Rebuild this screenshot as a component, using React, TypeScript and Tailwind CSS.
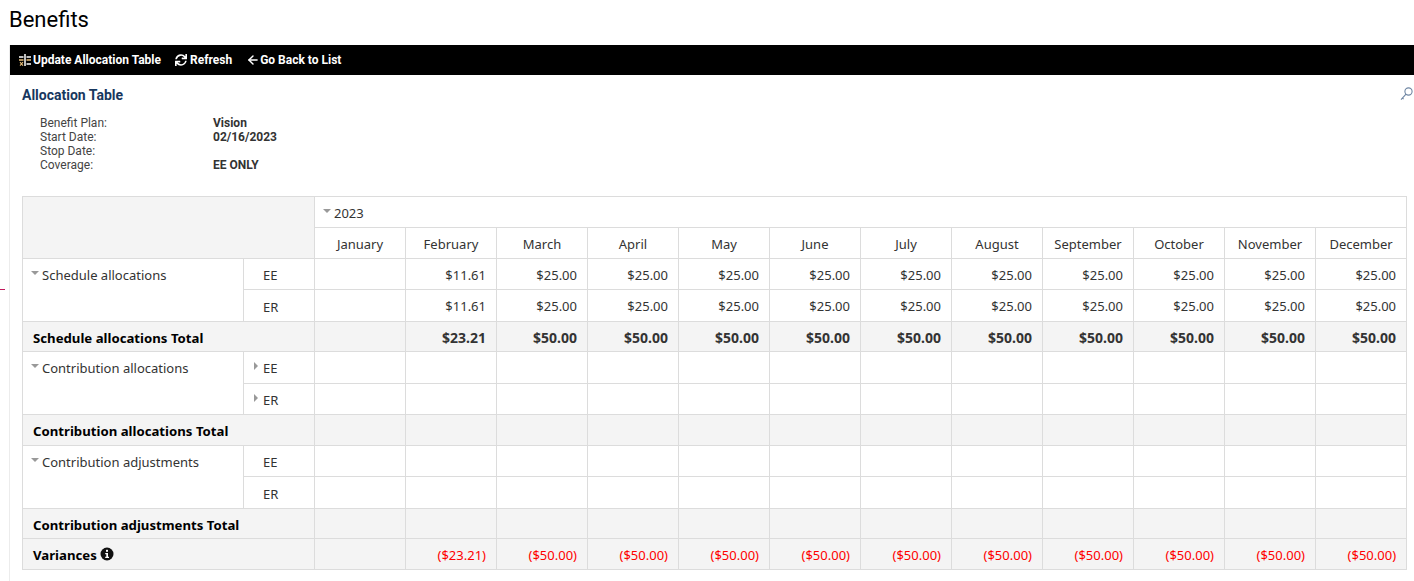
import { ArrowLeft } from "lucide-react";
import { FaSync } from "react-icons/fa";

const months = [
  "January",
  "February",
  "March",
  "April",
  "May",
  "June",
  "July",
  "August",
  "September",
  "October",
  "November",
  "December",
];

const vals = (first: string, rest: string) =>
  ["", first, ...Array(10).fill(rest)] as string[];

const blank = Array(12).fill("") as string[];

const border = "border border-[#dcdcdc] align-middle";
const cell = `${border} pl-[9px] pr-[10px] pt-[3px]`;

function DownCaret() {
  return (
    <span className="inline-block w-0 h-0 mr-[3px] mb-[5px] border-x-[4px] border-x-transparent border-t-[4px] border-t-[#999]" />
  );
}

function RightCaret() {
  return (
    <span className="absolute left-[10px] top-[10px] w-0 h-0 border-y-[4px] border-y-transparent border-l-[4px] border-l-[#999]" />
  );
}

function GroupRows({
  label,
  ee,
  er,
  totals,
  carets,
  totalPad = "pt-[5px]",
  h,
}: {
  label: string;
  ee: string[];
  er: string[];
  totals: string[];
  carets?: boolean;
  totalPad?: string;
  h: [string, string, string];
}) {
  return (
    <>
      <tr className={h[0]}>
        <td rowSpan={2} className="border border-[#dcdcdc] align-top pt-[7px] pl-[8px]">
          <DownCaret />
          {label}
        </td>
        <td className={`${border} relative pl-[19px] pt-[3px]`}>
          {carets && <RightCaret />}
          EE
        </td>
        {ee.map((v, i) => (
          <td key={i} className={`${cell} text-right`}>
            {v}
          </td>
        ))}
      </tr>
      <tr className={h[1]}>
        <td className={`${border} relative pl-[19px] pt-[4px]`}>
          {carets && <RightCaret />}
          ER
        </td>
        {er.map((v, i) => (
          <td key={i} className={`${cell} text-right`}>
            {v}
          </td>
        ))}
      </tr>
      <tr className={`${h[2]} bg-[#f4f4f4] font-bold`}>
        <td colSpan={2} className={`${border} pl-[10px] ${totalPad} text-black text-[13.2px]`}>
          {label} Total
        </td>
        {totals.map((v, i) => (
          <td key={i} className={`${border} pl-[9px] pr-[10px] pt-[1px] text-right text-[14px]`}>
            {v}
          </td>
        ))}
      </tr>
    </>
  );
}

export default function App() {
  return (
    <div className="relative h-[581px] overflow-hidden bg-white font-['Roboto',sans-serif] text-[#222]">
      <span className="absolute left-0 top-[289px] w-[5px] h-px bg-[#c2185b]" />
      <h1 className="h-[45px] pl-[9px] pt-[6px] text-[22px] leading-[28px] font-normal text-black">
        Benefits
      </h1>
      <div className="ml-[9px] h-[536px] border-l border-[#ececec]">
        <div className="flex items-center h-[30px] pl-[9px] gap-[14px] bg-black text-white text-[12px] font-bold">
          <span className="flex items-center gap-[2px]">
            <svg width="12" height="12" viewBox="0 0 12 12" fill="none" strokeWidth="1.5">
              <path d="M0 3h4.5M7.5 3H12" stroke="#fff" />
              <path d="M0 6h4.5M7.5 6H12" stroke="#e8bd78" />
              <path d="M6 0v12" stroke="#fff" />
              <path d="M7.5 10H12" stroke="#fff" />
              <path d="M1 8.2l3 3.4M4 8.2l-3 3.4" stroke="#e8bd78" strokeWidth="1.1" />
            </svg>
            Update Allocation Table
          </span>
          <span className="flex items-center gap-[3px]">
            <FaSync size={12} />
            Refresh
          </span>
          <span className="flex items-center">
            <ArrowLeft size={14} strokeWidth={2.5} />
            Go Back to List
          </span>
        </div>

        <div className="relative pl-[12px]">
          <h2 className="pt-[12px] text-[14px] leading-[17px] font-bold text-[#17375e]">
            Allocation Table
          </h2>
          <svg
            className="absolute right-[1px] top-[12px]"
            width="13"
            height="14"
            viewBox="0 0 13 14"
            fill="none"
            stroke="#6f86a3"
            strokeWidth="1.1"
          >
            <circle cx="8.5" cy="4.5" r="3.6" />
            <path d="M6 7.2L1 12.6M2.4 11l1.2 1.1" />
          </svg>

          <dl className="grid grid-cols-[173px_1fr] pl-[18px] pt-[12px] text-[12px] leading-[14px] text-[#444]">
            <dt>Benefit Plan:</dt>
            <dd className="font-bold text-[#333]">Vision</dd>
            <dt>Start Date:</dt>
            <dd className="font-bold text-[#333]">02/16/2023</dd>
            <dt>Stop Date:</dt>
            <dd />
            <dt>Coverage:</dt>
            <dd className="font-bold text-[#333]">EE ONLY</dd>
          </dl>

          <table className="mt-[24px] table-fixed border-collapse w-[1384px] font-['Noto_Sans',sans-serif] text-[13px] text-[#333]">
            <colgroup>
              <col className="w-[221px]" />
              <col className="w-[71px]" />
              {months.map((m) => (
                <col key={m} className="w-[91px]" />
              ))}
            </colgroup>
            <tbody>
              <tr className="h-[31px]">
                <td colSpan={2} rowSpan={2} className={`${border} bg-[#f4f4f4]`} />
                <td colSpan={12} className={`${border} pl-[8px] pt-[3px]`}>
                  <DownCaret />
                  2023
                </td>
              </tr>
              <tr className="h-[31px]">
                {months.map((m) => (
                  <td key={m} className={`${border} pt-[3px] text-center`}>
                    {m}
                  </td>
                ))}
              </tr>
              <GroupRows
                label="Schedule allocations"
                ee={vals("$11.61", "$25.00")}
                er={vals("$11.61", "$25.00")}
                totals={vals("$23.21", "$50.00")}
                h={["h-[31px]", "h-[32px]", "h-[30px]"]}
              />
              <GroupRows
                label="Contribution allocations"
                ee={blank}
                er={blank}
                totals={blank}
                carets
                totalPad="pt-[3px]"
                h={["h-[32px]", "h-[31px]", "h-[31px]"]}
              />
              <GroupRows
                label="Contribution adjustments"
                ee={blank}
                er={blank}
                totals={blank}
                h={["h-[31px]", "h-[32px]", "h-[30px]"]}
              />
              <tr className="h-[31px] bg-[#f4f4f4]">
                <td colSpan={2} className={`${border} pl-[10px] pt-[3px] font-bold text-black text-[13.2px]`}>
                  Variances{" "}
                  <svg className="inline-block mb-[4px]" width="14" height="14" viewBox="0 0 14 14">
                    <circle cx="7" cy="7" r="6.5" fill="#111" />
                    <rect x="6" y="2.8" width="2" height="2" fill="#fff" />
                    <path d="M5.2 6h2.8v3.7h1v1.2H5.2V9.7h1.1V7.2H5.2z" fill="#fff" />
                  </svg>
                </td>
                {vals("($23.21)", "($50.00)").map((v, i) => (
                  <td key={i} className={`${cell} text-right text-[#ff0000]`}>
                    {v}
                  </td>
                ))}
              </tr>
            </tbody>
          </table>
        </div>
      </div>
    </div>
  );
}
